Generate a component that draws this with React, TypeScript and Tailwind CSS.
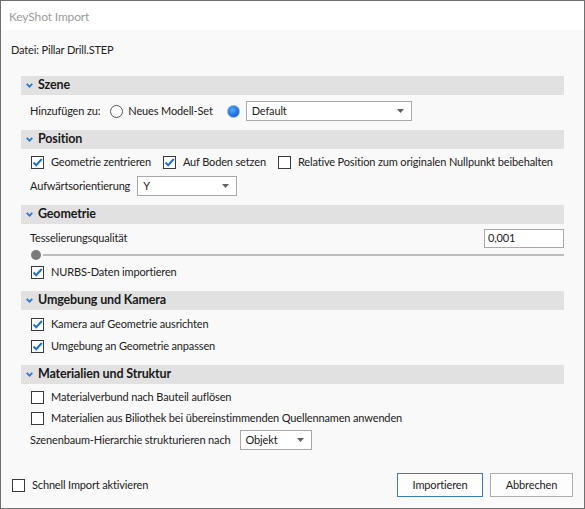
import React from "react";

const font = { fontFamily: 'Lato, "Liberation Sans", sans-serif', letterSpacing: "-0.15px" };

const Check = ({ checked }: { checked?: boolean }) => (
  <span className="relative inline-flex w-[13px] h-[13px] shrink-0 border border-[#3a3a3a] bg-white">
    {checked && (
      <svg width="13" height="13" viewBox="0 0 13 13" className="absolute -left-px -top-px">
        <path d="M2.5 6.5 L5.2 9.2 L10.8 3" fill="none" stroke="#1f6fd8" strokeWidth="2" />
      </svg>
    )}
  </span>
);

const CheckRow = ({ checked, label, className = "" }: { checked?: boolean; label: string; className?: string }) => (
  <div className={`flex items-center gap-[7px] h-[20px] whitespace-nowrap ${className}`}>
    <Check checked={checked} />
    <span>{label}</span>
  </div>
);

const Select = ({ value, width }: { value: string; width: string }) => (
  <div className={`flex items-center justify-between h-[20px] border border-[#a9a9a9] bg-white pl-[5px] pr-[7px] ${width}`}>
    <span>{value}</span>
    <svg width="7" height="4" viewBox="0 0 7 4">
      <path d="M0 0 H7 L3.5 4 Z" fill="#606060" />
    </svg>
  </div>
);

const Band = ({ title }: { title: string }) => (
  <div className="flex items-center h-[19px] bg-[#e1e1e1] pl-[5px] gap-[5px] font-bold text-[12.5px] text-[#1a1a1a]">
    <svg width="7" height="5" viewBox="0 0 7 5">
      <path d="M0.7 0.8 L3.5 3.7 L6.3 0.8" fill="none" stroke="#2f77cf" strokeWidth="1.8" />
    </svg>
    <span>{title}</span>
  </div>
);

export default function App() {
  return (
    <div
      className="w-[585px] h-[509px] border border-[#707070] bg-[#f9f9f9] flex flex-col text-[11px] text-[#222222] overflow-hidden"
      style={font}
    >
      <div className="h-[29px] bg-white flex items-center pl-[8px] pt-[2px] text-[12px] text-[#9b9b9b] shrink-0">
        KeyShot Import
      </div>

      <div className="flex flex-col px-[20px] flex-1 whitespace-nowrap">
        <div className="h-[20px] mt-[10px] -ml-[10px] flex items-center">Datei: Pillar Drill.STEP</div>

        <div className="mt-[16px]">
          <Band title="Szene" />
          <div className="mt-[6px] ml-[9px] h-[20px] flex items-center">
            <span>Hinzufügen zu:</span>
            <span className="ml-[10px] w-[13px] h-[13px] rounded-full border border-[#555555] bg-white" />
            <span className="ml-[5px]">Neues Modell-Set</span>
            <span className="ml-[14px] w-[13px] h-[13px] rounded-full bg-[radial-gradient(circle_at_40%_35%,#5aa8ff,#1566d6_70%)] border border-[#7fb0e8]" />
            <div className="ml-[6px]">
              <Select value="Default" width="w-[166px]" />
            </div>
          </div>
        </div>

        <div className="mt-[9px]">
          <Band title="Position" />
          <div className="mt-[3px] ml-[10px] flex items-center">
            <CheckRow checked label="Geometrie zentrieren" />
            <CheckRow checked label="Auf Boden setzen" className="ml-[12px]" />
            <CheckRow label="Relative Position zum originalen Nullpunkt beibehalten" className="ml-[12px]" />
          </div>
          <div className="mt-[4px] ml-[9px] h-[20px] flex items-center gap-[7px]">
            <span>Aufwärtsorientierung</span>
            <Select value="Y" width="w-[100px]" />
          </div>
        </div>

        <div className="mt-[9px]">
          <Band title="Geometrie" />
          <div className="mt-[5px] ml-[9px] h-[19px] flex items-center justify-between">
            <span>Tesselierungsqualität</span>
            <div className="w-[80px] h-[19px] border border-[#a9a9a9] bg-white pl-[3px] flex items-center">0,001</div>
          </div>
          <div className="ml-[10px] h-[13px] flex items-center">
            <span className="w-[10px] h-[10px] rounded-full bg-[#7a7a7a] shrink-0" />
            <span className="flex-1 h-[2px] bg-[#bcbcbc] ml-[2px]" />
          </div>
          <CheckRow checked label="NURBS-Daten importieren" className="ml-[10px] mt-[1px]" />
        </div>

        <div className="mt-[9px]">
          <Band title="Umgebung und Kamera" />
          <CheckRow checked label="Kamera auf Geometrie ausrichten" className="ml-[10px] mt-[4px]" />
          <CheckRow checked label="Umgebung an Geometrie anpassen" className="ml-[10px] mt-[2px]" />
        </div>

        <div className="mt-[9px]">
          <Band title="Materialien und Struktur" />
          <CheckRow label="Materialverbund nach Bauteil auflösen" className="ml-[10px] mt-[3px]" />
          <CheckRow label="Materialien aus Biliothek bei übereinstimmenden Quellennamen anwenden" className="ml-[10px] mt-[1px]" />
          <div className="mt-[2px] ml-[9px] h-[20px] flex items-center gap-[9px]">
            <span>Szenenbaum-Hierarchie strukturieren nach</span>
            <Select value="Objekt" width="w-[72px]" />
          </div>
        </div>

        <div className="mt-[23px] -ml-[9px] -mr-[9px] flex items-center">
          <CheckRow label="Schnell Import aktivieren" />
          <div className="ml-auto flex gap-[7px]">
            <button className="w-[86px] h-[24px] border border-[#3a7cbd] bg-[#fdfdfd]">Importieren</button>
            <button className="w-[83px] h-[24px] border border-[#adadad] bg-[#fdfdfd]">Abbrechen</button>
          </div>
        </div>
      </div>
    </div>
  );
}
